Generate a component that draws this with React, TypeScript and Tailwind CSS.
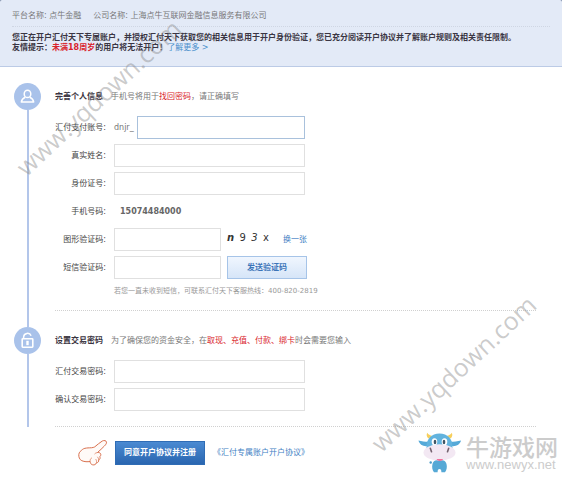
import type { ReactNode } from 'react'

interface FieldProps {
  id: string
  label: string
  children: ReactNode
}

const inputClass =
  'block h-[23px] min-w-0 border border-[#e0e0e0] bg-white px-2 text-[8px] text-[#555] outline-none'

function Field({ id, label, children }: FieldProps) {
  return (
    <div className="flex h-[23px] items-center gap-2">
      <label htmlFor={id} className="w-[51px] shrink-0 text-right whitespace-nowrap text-[#444]">
        {label}
      </label>
      {children}
    </div>
  )
}

interface StepProps {
  icon: ReactNode
  title: string
  hint: ReactNode
  children: ReactNode
}

function Step({ icon, title, hint, children }: StepProps) {
  return (
    <section className="flex gap-[14px]">
      <div className="flex w-[27px] shrink-0 flex-col items-center">
        <div className="flex size-[27px] items-center justify-center rounded-full bg-[#a9c2ea]">{icon}</div>
        <div className="w-[2px] flex-1 bg-[#b3c6ea]" />
      </div>
      <div className="min-w-0 flex-1">
        <div className="flex h-[27px] items-center gap-2 whitespace-nowrap">
          <h2 className="font-bold text-[#3a3340]">{title}</h2>
          <p className="text-[#777]">{hint}</p>
        </div>
        <div className="mt-[6px] flex flex-col gap-[5px]">{children}</div>
      </div>
    </section>
  )
}

function UserIcon() {
  return (
    <svg width="15" height="15" viewBox="0 0 15 15" fill="none" stroke="#fff" strokeWidth="1.5">
      <ellipse cx="7.5" cy="4.900" rx="3.300" ry="3.700" />
      <path d="M5.200 8.300C3.500 9 1.700 10 1.300 13.100h12.400c-.4-3.100-2.200-4.100-3.900-4.800" strokeLinejoin="round" />
    </svg>
  )
}

function LockIcon() {
  return (
    <svg width="15" height="17" viewBox="0 0 15 17" fill="none" stroke="#fff">
      <path d="M3.6 6.2V5a3.9 3.9 0 0 1 7.5-1.2" strokeWidth="1.5" />
      <rect x="2.2" y="6.8" width="10.6" height="8.4" rx="0.6" strokeWidth="1.6" />
      <path d="M7.5 8.800v4.400" strokeWidth="2.400" />
    </svg>
  )
}

function HandIcon() {
  return (
    <svg width="30" height="26" viewBox="0 0 30 26" fill="#fffaf7" stroke="#d9714f" strokeWidth="1" strokeLinejoin="round">
      <path d="M.8 14.500c.2-2.600 2.200-3.600 3.600-5 1.500-1.200 3.300-1.400 5.600-1.600 2.300-.1 4.800 0 6.700-1C19.400 5 21.500 2.500 24.300 1c1.900-.9 4-.5 4.200 1.200.1 1.500-1 2.700-2.200 3.900-2 2.100-4.300 4.200-6.800 6.400 1.700-.1 3.200.4 3.300 1.900.1 1-.3 1.700-1 2.300.6 1.300.3 2.600-1.100 3.300.2 1.700-.6 2.600-2.200 2.800-.7 1.800-2.200 2.400-3.900 2-1.500-.3-2.300-1.500-2.500-3.300-2.700.4-5.500.4-8.300-.8-2.400-1.100-3.200-3.800-3-6.200z" />
      <path d="M12.100 21.500c-.1-1.600.4-2.900 1.700-3.700M18.500 22.800c.2-1.700-.1-2.800-.9-3.800M20.700 20c0-1.400-.5-2.400-1.300-3.200M19.500 12.500c-1.300.1-2.300.7-3 1.600" fill="none" strokeWidth="0.700" />
    </svg>
  )
}

function CowLogo() {
  return (
    <svg width="44" height="41" viewBox="0 0 44 41">
      <path d="M10.500 6.500C8.500 5 8.300 2.500 9.200.8c1 1.800 3 2.600 5 3.200zM32.500 6.500c2-1.500 2.200-4 1.300-5.700-1 1.800-3 2.600-5 3.200z" fill="#f7cf5c" />
      <path d="M10.500 9.800C7 9.800 3.500 9.500.5 8.600c.8 4 5 6.200 9 5.500zM32.500 9.800c3.500 0 7-.3 10.500-1.200-.8 4-5 6.200-9.500 5.500z" fill="#55a9d8" />
      <path d="M8.500 16C8 7 13.500 1.600 21.500 1.600S35 7 34.500 16z" fill="#62b3de" />
      <path d="M14.500 32c1-3.500 4-4.500 7-4.500s6 1 7 4.500c.8 3 .2 6-1.500 8.200h-3.600c0-2-.6-3.200-1.900-3.200s-1.900 1.200-1.900 3.200H16c-1.700-2.200-2.300-5.200-1.500-8.200z" fill="#56a9d6" />
      <ellipse cx="21.500" cy="20.500" rx="16" ry="8.200" fill="#f3e8f3" />
      <ellipse cx="16.500" cy="9.700" rx="2.800" ry="3.500" fill="#fff" />
      <ellipse cx="26.500" cy="9.700" rx="2.800" ry="3.500" fill="#fff" />
      <ellipse cx="17" cy="10" rx="1.300" ry="2.200" fill="#3f5666" />
      <ellipse cx="26" cy="10" rx="1.300" ry="2.200" fill="#3f5666" />
      <path d="M12.300 16.300l1.200 3.400M30.700 16.300l-1.200 3.400" stroke="#74626f" strokeWidth="1.600" strokeLinecap="round" />
      <path d="M18.500 27h6.500c-.4 2.400-5.500 2.700-6.500 0z" fill="#f0709a" />
      <circle cx="12.700" cy="30.500" r="1.200" fill="#4c9cc9" />
    </svg>
  )
}

export default function App() {
  return (
    <div className="relative min-h-screen overflow-hidden bg-white font-['DejaVu_Sans','Noto_Sans_CJK_SC',sans-serif] text-[8px] leading-[10px]">
      <div className="bg-[#6d7f9c]">
        <header className="rounded-t-[2px] border-b border-[#bccbe6] bg-[#e3eaf7] px-3 pt-2 pb-[13px]">
          <div className="flex gap-3 border-b border-dotted border-[#cfd6e3] pb-[2px] leading-[16px] text-[#777]">
            <span>平台名称: 点牛金融</span>
            <span>公司名称: 上海点牛互联网金融信息服务有限公司</span>
          </div>
          <p className="pt-[6px] font-bold text-[#3a3543]">
            您正在开户汇付天下专属账户，并授权汇付天下获取您的相关信息用于开户身份验证，您已充分阅读开户协议并了解账户规则及相关责任限制。
            <br />
            友情提示：<span className="text-[#d9232b]">未满18周岁</span>的用户将无法开户！
            <a href="#more" className="font-normal text-[#4a90cc]">了解更多 &gt;</a>
          </p>
        </header>
      </div>

      <form className="pt-4 pr-[26px] pb-3 pl-[14px]" onSubmit={(e) => e.preventDefault()}>
        <Step
          icon={<UserIcon />}
          title="完善个人信息"
          hint={<>手机号将用于<span className="text-[#d9232b]">找回密码</span>，请正确填写</>}
        >
          <Field id="account" label="汇付支付账号:">
            <div className="flex w-[191px] items-center gap-[3px] text-[#777]">
              <span>dnjr_</span>
              <input id="account" type="text" className="block h-[23px] min-w-0 flex-1 border border-[#a9c1dc] bg-white px-2 outline-none" />
            </div>
          </Field>
          <Field id="realname" label="真实姓名:">
            <input id="realname" type="text" className={`${inputClass} w-[191px]`} />
          </Field>
          <Field id="idcard" label="身份证号:">
            <input id="idcard" type="text" className={`${inputClass} w-[191px]`} />
          </Field>
          <Field id="phone" label="手机号码:">
            <output id="phone" className="pl-[6px] font-bold text-[#666]">15074484000</output>
          </Field>
          <Field id="captcha" label="图形验证码:">
            <input id="captcha" type="text" className={`${inputClass} w-[107px]`} />
            <div className="-ml-[2px] flex w-[42px] justify-between pb-1 text-[10px] text-[#333]">
              <b className="italic">n</b>
              <span>9</span>
              <b className="font-medium italic">3</b>
              <span>x</span>
            </div>
            <a href="#captcha" className="ml-[6px] text-[#3f7fc4]">换一张</a>
          </Field>
          <Field id="sms" label="短信验证码:">
            <input id="sms" type="text" className={`${inputClass} w-[107px]`} />
            <button
              type="button"
              className="-ml-[2px] h-[23px] w-[80px] border border-[#a6c4e8] bg-linear-to-b from-[#f0f6fe] to-[#d6e5f8] font-bold text-[#3c74b8]"
            >
              发送验证码
            </button>
          </Field>
          <p className="pl-[59px] text-[7px] leading-[14px] text-[#999]">
            若您一直未收到短信，可联系汇付天下客服热线：400-820-2819
          </p>
          <div className="mt-[7px] mb-4 border-b border-dotted border-[#d0d0d0]" />
        </Step>

        <Step
          icon={<LockIcon />}
          title="设置交易密码"
          hint={
            <>
              为了确保您的资金安全，在<span className="text-[#d9232b]">取现、充值、付款、绑卡</span>时会需要您输入
            </>
          }
        >
          <Field id="password" label="汇付交易密码:">
            <input id="password" type="password" className={`${inputClass} w-[191px]`} />
          </Field>
          <Field id="confirm" label="确认交易密码:">
            <input id="confirm" type="password" className={`${inputClass} w-[191px]`} />
          </Field>
          <div className="mt-[10px] border-b border-dotted border-[#d0d0d0]" />
        </Step>

        <div className="mt-[14px] flex h-6 items-center pl-16">
          <HandIcon />
          <button
            type="submit"
            className="ml-[7px] h-6 w-[90px] border border-[#2f6cb5] bg-linear-to-b from-[#4a8ad2] to-[#2a66b0] font-bold text-white"
          >
            同意开户协议并注册
          </button>
          <a href="#agreement" className="ml-2 text-[#3f7fc4]">《汇付专属账户开户协议》</a>
        </div>
      </form>

      <div className="pointer-events-none absolute top-[84px] left-[-17px] w-[230px] -rotate-43 text-center font-['Open_Sans',sans-serif] text-[25px] leading-[26px] text-[#8c8c8c]/45">
        www.yqdown.com
      </div>
      <div className="pointer-events-none absolute top-[360px] left-[338px] w-[230px] -rotate-43 text-center font-['Open_Sans',sans-serif] text-[25px] leading-[26px] text-[#8c8c8c]/45">
        www.yqdown.com
      </div>
      <div className="absolute right-1 bottom-1 flex items-center gap-1">
        <CowLogo />
        <div className="text-[#cccccc]">
          <div className="font-['Noto_Sans_CJK_SC',sans-serif] text-[23px] leading-6 font-medium">牛游戏网</div>
          <div className="font-['Liberation_Sans',sans-serif] text-[13px] leading-[13px]">www.newyx.net</div>
        </div>
      </div>
    </div>
  )
}
